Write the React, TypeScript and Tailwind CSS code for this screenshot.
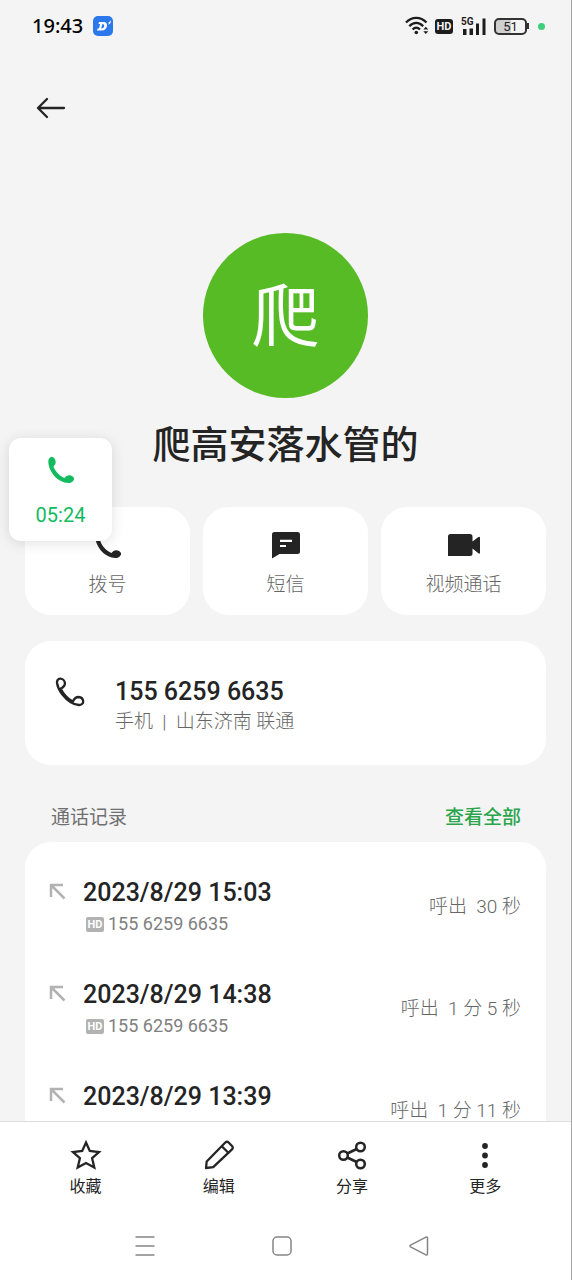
import React from 'react'

const calls = [
  { time: '2023/8/29 15:03', number: '155 6259 6635', length: '呼出  30 秒' },
  { time: '2023/8/29 14:38', number: '155 6259 6635', length: '呼出  1 分 5 秒' },
  { time: '2023/8/29 13:39', number: '155 6259 6635', length: '呼出  1 分 11 秒' },
]

function Handset() {
  return (
    <svg width="28" height="28" viewBox="0 0 28 28" fill="currentColor" aria-hidden="true">
      <path d="M4.5 .8C2.5 1.3 1.2 3.2 1.3 5.8C1.8 16.5 11 26.8 21.5 27C24.6 27 27 25 27.1 22.5C26.8 20.5 24.5 19.3 22.3 19.2C20 19.3 18.8 20.5 17.4 21.9C12.6 19.8 8.2 15.2 6.4 10.4C8 9 9 7.5 8.6 5.2C8.2 3 6.5 .6 4.5 .8Z" />
    </svg>
  )
}

function HandsetOutline() {
  return (
    <svg width="30" height="30" viewBox="0 0 30 30" fill="none" stroke="currentColor" strokeWidth="2.3" strokeLinejoin="round" aria-hidden="true">
      <path d="M5.8 11.6C8.2 10.2 10.3 8.4 9.9 5.8C9.5 3.5 7.5 1.5 5.2 1.6C3 1.8 1.7 3.6 2 6C2.5 9.5 4.3 13.5 7.2 17.2C11.8 23 17.5 27.6 24 28C26.5 28 28.2 26.4 28.2 24.4C28 21.9 26 20.2 23.6 20C20.8 20 19.2 21.5 17.8 24.6C12.6 21.6 8.2 17 5.8 11.6Z" />
    </svg>
  )
}

function MessageIcon() {
  return (
    <svg width="32" height="32" viewBox="0 0 32 32" aria-hidden="true">
      <path d="M4.5 3H27.5Q30 3 30 5.5V22.5Q30 25 27.5 25H9.5L2 29.5V5.5Q2 3 4.5 3Z" fill="currentColor" />
      <path d="M10 11.8H22M10 17H16" stroke="#fff" strokeWidth="2.2" />
    </svg>
  )
}

function VideoIcon() {
  return (
    <svg width="34" height="32" viewBox="0 0 34 32" fill="currentColor" aria-hidden="true">
      <path d="M3.5 5H23Q25.5 5 25.5 7.5V12.6L31 8.2Q33 7 33 9V23.5Q33 25.5 31 24L25.5 19.5V24.5Q25.5 27 23 27H1V7.5Q1 5 3.5 5Z" />
    </svg>
  )
}

function StatusBar() {
  return (
    <div className="flex h-[52px] items-center pl-8 pr-[26px] text-black">
      <span className="font-['Noto_Sans',sans-serif] text-[20px] leading-6 font-medium">19:43</span>
      <svg className="ml-2.5" width="20" height="20" viewBox="0 0 20 20" aria-hidden="true">
        <rect width="20" height="20" rx="5" fill="#2b78ec" />
        <path d="M6 6H10.7C16 6 14.8 14.5 8.8 14.5H4L4.6 12.6H6L7.1 7.9H5.4Z" fill="#fff" />
        <path d="M9.3 8L8.2 12.4C11.7 12.500 12.500 8 9.300 8Z" fill="#2b78ec" />
        <path d="M16 6.2L18.2 4.2L17.2 7.4L15.3 8.8Z" fill="#fff" />
      </svg>
      <div className="ml-auto flex items-center">
        <svg width="24" height="20" viewBox="0 0 24 20" fill="none" stroke="#1c1c1c" strokeWidth="2.2" aria-hidden="true">
          <path d="M1 6.5C7 .2 15.5 .2 21.5 6.5M4.3 10.2C8.5 5.7 14 5.7 18.2 10.2M7.6 13.6C10 11 12.5 11 15 13.6" />
          <circle cx="11.3" cy="16.5" r="1.8" fill="#1c1c1c" stroke="none" />
          <path d="M18.3 13.5L20.8 10.8L23.3 13.5ZM18.3 15.2L20.8 18L23.3 15.2Z" fill="#1c1c1c" stroke="none" />
        </svg>
        <span className="ml-1.5 flex h-[15px] w-[18px] items-center justify-center rounded-[3px] bg-[#1c1c1c] text-[11px] leading-none font-bold text-[#f4f4f4]">HD</span>
        <div className="relative ml-2 h-[18px] w-[25px]">
          <svg width="25" height="18" viewBox="0 0 25 18" fill="#1c1c1c" aria-hidden="true">
            <path d="M2 12H5.500V18H2ZM8.500 11.500H12V18H8.500ZM15 6.500H18V18H15ZM21.500 1.500H24.500V18H21.500Z" />
          </svg>
          <span className="absolute left-0 top-0 text-[10px] leading-[10px] font-bold text-[#1c1c1c]">5G</span>
        </div>
        <div className="ml-2 flex items-center">
          <span className="flex h-[17px] w-[33px] items-center justify-center rounded-[5px] border-2 border-[#333] bg-linear-to-r from-[#cfcfcf] from-50% to-[#f4f4f4] to-50% text-[13px] leading-none text-[#222]">51</span>
          <span className="h-1.5 w-0.5 bg-[#333]" />
        </div>
        <span className="ml-[9px] size-[7px] rounded-full bg-[#3ccf7c]" />
      </div>
    </div>
  )
}

export default function App() {
  return (
    <div className="relative flex h-screen flex-col overflow-hidden border-r border-[#a6a6a6] bg-[#f4f4f4] font-['Roboto','Noto_Sans_CJK_SC',sans-serif] text-[#242424]" lang="zh-CN">
      <StatusBar />

      <main className="min-h-0 flex-1 overflow-hidden px-[25px]">
        <div className="flex h-28 items-center pl-2.5">
          <button type="button" aria-label="返回">
            <svg width="32" height="24" viewBox="0 0 32 24" fill="none" stroke="currentColor" strokeWidth="2.3" strokeLinecap="round" strokeLinejoin="round" aria-hidden="true">
              <path d="M29 12H3M12 3L3 12L12 21" />
            </svg>
          </button>
        </div>

        <div className="flex flex-col items-center pt-[69px]">
          <div className="flex size-[165px] items-center justify-center rounded-full bg-[#57bb25] pt-1 text-[68px] leading-none text-white">爬</div>
          <h1 className="mt-5 text-[38px] leading-[54px] font-medium">爬高安落水管的</h1>
        </div>

        <div className="mt-[35px] grid grid-cols-3 gap-[13px]">
          <button type="button" className="flex h-[108px] flex-col items-center rounded-[26px] bg-white pt-[22px]">
            <span className="flex h-8 items-center"><Handset /></span>
            <span className="mt-3 text-[19px] leading-6 font-light text-[#666]">拨号</span>
          </button>
          <button type="button" className="flex h-[108px] flex-col items-center rounded-[26px] bg-white pt-[22px]">
            <MessageIcon />
            <span className="mt-3 text-[19px] leading-6 font-light text-[#666]">短信</span>
          </button>
          <button type="button" className="flex h-[108px] flex-col items-center rounded-[26px] bg-white pt-[22px]">
            <VideoIcon />
            <span className="mt-3 text-[19px] leading-6 font-light text-[#666]">视频通话</span>
          </button>
        </div>

        <div className="mt-[26px] flex h-[124px] rounded-[26px] bg-white pl-[30px] pt-9">
          <HandsetOutline />
          <div className="ml-[30px]">
            <p className="text-[25px] leading-[30px] font-medium">155 6259 6635</p>
            <p className="text-[19px] leading-[30px] font-light whitespace-pre text-[#666]">手机  |  山东济南 联通</p>
          </div>
        </div>

        <div className="mt-[41px] flex items-center justify-between pl-[26px] pr-[25px] text-[19px] leading-6">
          <h2 className="text-[#707070]">通话记录</h2>
          <a href="#all" className="font-medium text-[#2ba54c]">查看全部</a>
        </div>

        <ul className="mt-3 rounded-t-[26px] bg-white pl-6 pr-[25px] pt-[35px]">
          {calls.map((call) => (
            <li key={call.time} className="flex h-[102px] items-start">
              <svg className="mt-1.5" width="18" height="18" viewBox="0 0 18 18" fill="none" stroke="#b2b2b2" strokeWidth="2.5" aria-hidden="true">
                <path d="M2 14V2H14M2 2L15.5 15.5" />
              </svg>
              <div className="ml-4">
                <p className="text-[25px] leading-8 font-medium">{call.time}</p>
                <p className="flex items-center pl-[3px] text-[18px] leading-[30px] text-[#808080]">
                  <span className="mr-1 flex h-[15px] w-[18px] items-center justify-center rounded-xs bg-[#b2b2b2] text-[11px] leading-none font-bold text-white">HD</span>
                  {call.number}
                </p>
              </div>
              <p className="ml-auto mt-4 text-[19px] leading-7 font-light whitespace-pre text-[#666]">{call.length}</p>
            </li>
          ))}
        </ul>
      </main>

      <footer className="border-t border-[#dcdcdc] bg-white">
        <nav className="grid grid-cols-4 px-[19px] pt-[17px] text-[16px] leading-6">
          <button type="button" className="flex flex-col items-center gap-1">
            <svg width="32" height="32" viewBox="0 0 32 32" fill="none" stroke="currentColor" strokeWidth="2.3" aria-hidden="true">
              <path d="M16 3.5L19.8 12L29 13L22.1 19.2L24.3 28.5L16 24L7.7 28.5L9.900 19.200L3 13L12.200 12Z" />
            </svg>
            收藏
          </button>
          <button type="button" className="flex flex-col items-center gap-1">
            <svg width="32" height="32" viewBox="0 0 32 32" fill="none" stroke="currentColor" strokeWidth="2.3" strokeLinejoin="round" aria-hidden="true">
              <path d="M3 29L3.7 22.5L22.3 3.5Q24 2 25.6 3.5L29 7Q30.5 8.7 29 10.4L10.2 28.2ZM18.8 7.3L25.3 13.7" />
            </svg>
            编辑
          </button>
          <button type="button" className="flex flex-col items-center gap-1">
            <svg width="32" height="32" viewBox="0 0 32 32" fill="none" stroke="currentColor" strokeWidth="2.5" aria-hidden="true">
              <circle cx="7.5" cy="16.5" r="4.3" />
              <circle cx="24.5" cy="8" r="4.3" />
              <circle cx="24.5" cy="25" r="4.3" />
              <path d="M11.3 14.5L20.7 10M11.3 18.5L20.7 23" />
            </svg>
            分享
          </button>
          <button type="button" className="flex flex-col items-center gap-1">
            <svg width="32" height="32" viewBox="0 0 32 32" fill="currentColor" aria-hidden="true">
              <circle cx="16" cy="7" r="2.9" />
              <circle cx="16" cy="16.5" r="2.9" />
              <circle cx="16" cy="26" r="2.9" />
            </svg>
            更多
          </button>
        </nav>

        <div className="grid h-[81px] grid-cols-3 items-center justify-items-center pl-[76px] pr-[84px] pt-3 text-[#858585]">
          <button type="button" aria-label="最近任务">
            <svg width="22" height="22" viewBox="0 0 22 22" stroke="currentColor" strokeWidth="1.5" aria-hidden="true">
              <path d="M1.5 2H20.5M1.5 11H20.5M1.5 20H20.5" />
            </svg>
          </button>
          <button type="button" aria-label="主页">
            <svg width="22" height="22" viewBox="0 0 22 22" fill="none" stroke="currentColor" strokeWidth="1.5" aria-hidden="true">
              <rect x="2" y="2" width="18" height="18" rx="4" />
            </svg>
          </button>
          <button type="button" aria-label="后退">
            <svg width="22" height="22" viewBox="0 0 22 22" fill="none" stroke="currentColor" strokeWidth="1.5" strokeLinejoin="round" aria-hidden="true">
              <path d="M2.5 10.2L17.5 2.3Q19.5 1.5 19.5 3.5V18.5Q19.5 20.5 17.5 19.7L2.5 11.8Q1.3 11 2.5 10.2Z" />
            </svg>
          </button>
        </div>
      </footer>

      {/* floating bubble of the call in progress */}
      <button type="button" className="absolute left-[9px] top-[438px] flex size-[103px] flex-col items-center rounded-xl bg-white pt-[18px] text-[#12bb5f] shadow-[0_2px_14px_rgba(0,0,0,0.12)]">
        <Handset />
        <span className="mt-[19px] text-[20px] leading-6">05:24</span>
      </button>
    </div>
  )
}
